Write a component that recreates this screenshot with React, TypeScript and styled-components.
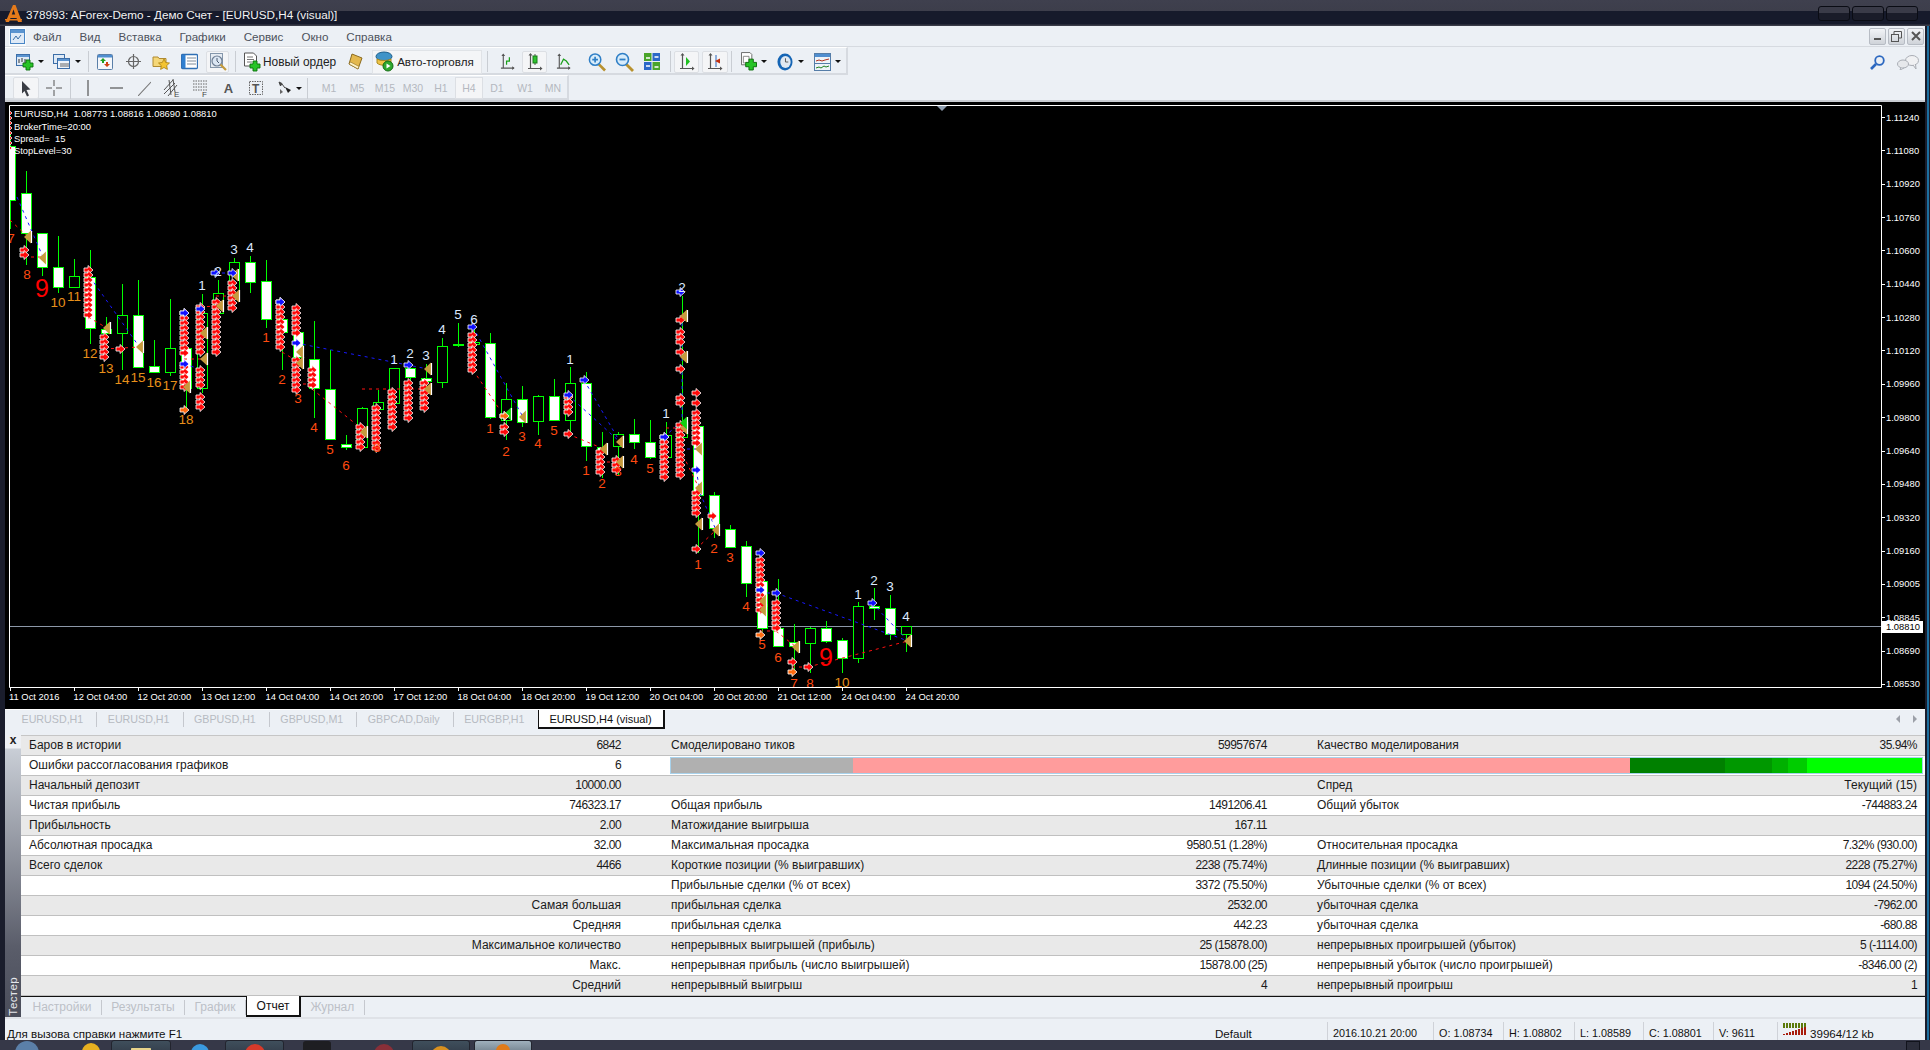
import React from 'react';
import styled, { createGlobalStyle } from 'styled-components';

const FONT = '"Liberation Sans", Arial, sans-serif';

const Global = createGlobalStyle`
  html, body { margin: 0; padding: 0; background: #1a1d2c; overflow: hidden; }
  #root { width: 1930px; height: 1050px; }
  * { box-sizing: border-box; }
`;

const App_ = styled.div`
  width: 1930px; height: 1050px; display: flex; flex-direction: column; overflow: hidden;
  font-family: ${FONT}; font-size: 12px; color: #111; background: #1a1d2c;
`;

const TitleBar = styled.div`
  height: 26px; flex: none; display: flex; align-items: center; padding: 2px 12px 0 5px;
  background: linear-gradient(#3f404e 0, #3d3e4b 11px, #161a2b 11px, #161a2b 24px, #3a3c48 25px);
  color: #f2f2f2; font-size: 11.7px;
`;
const TitleText = styled.span` margin-left: 4px; white-space: pre; `;
const GlassControls = styled.div` margin-left: auto; margin-top: -1px; display: flex; gap: 2px; `;
const GlassButton = styled.div`
  width: 32px; height: 15px; border: 1px solid #0a0c14; border-radius: 3px;
  background: linear-gradient(#3a3b48 50%, #1a1c29 50%);
`;

const Body = styled.div`
  flex: 1; min-height: 0; display: flex; flex-direction: column;
  padding: 0 2px 0 5px; background: #1a1d2c; border-right: 2px solid #1d6f9f; margin-right: 1px;
`;

const MenuBar = styled.div`
  height: 21px; flex: none; display: flex; align-items: center; background: #ecf0f5; padding-top: 1px;
  border-bottom: 1px solid #d6dae0; padding-left: 4px;
`;
const MenuIcon = styled.div` width: 17px; height: 18px; background: #f8fbfd; display: flex; align-items: center; justify-content: center; margin-right: 7px; `;
const MenuItem = styled.span` color: #4d525c; margin-right: 18px; font-size: 11.6px; `;
const WinButtons = styled.div` margin-left: auto; display: flex; gap: 2px; margin-right: 1px; margin-top: -1px; `;
const WinButton = styled.div`
  width: 17px; height: 17px; border: 1px solid #b7bcc4; border-radius: 2px; background: linear-gradient(#f2f4f7, #cfd3d9);
  display: flex; align-items: center; justify-content: center;
`;

const ToolRow = styled.div`
  height: ${p => p.$h}px; flex: none; display: flex; align-items: center; background: #ecf0f5;
  border-bottom: ${p => p.$last ? '2px solid #c9ccd2' : '0'};
`;
const ToolGroup = styled.div`
  height: 100%; display: flex; align-items: center; width: ${p => p.$w}px; padding-top: 2px;
  border-right: 2px solid #d6dae0; border-bottom: 2px solid #d6dae0; border-top: 1px solid #fff;
`;
const Slot = styled.div`
  flex: none; display: flex; align-items: center; justify-content: center;
  width: ${p => p.$w}px; margin-left: ${p => p.$ml || 0}px; height: 22px;
  ${p => p.$on ? 'background:#f4f5f7; border:1px solid #dcdfe4; border-radius:2px;' : ''}
`;
const LetterTool = styled(Slot)` color: #555; font-weight: 700; font-size: 13px; `;
const Sep = styled.div` flex: none; width: 1px; height: 21px; background: #c9cdd3; margin-left: ${p => p.$ml}px; `;
const Caret = styled.div`
  flex: none; margin-left: ${p => p.$ml}px; width: 0; height: 0;
  border-left: 3px solid transparent; border-right: 3px solid transparent; border-top: 3px solid #111;
`;
const OrderButton = styled.div` flex: none; display: flex; align-items: center; gap: 2px; margin-left: ${p => p.$ml}px; font-size: 11.9px; color: #222; white-space: pre; `;
const AutoButton = styled(OrderButton)`
  width: 110px; height: 24px; padding-left: 2px; background: #f4f5f7; border: 1px solid #e0e3e7; font-size: 11.6px;
`;
const Period = styled.div`
  flex: none; width: 28px; text-align: center; color: #b4b8bf; font-size: 10.5px; line-height: 22px; height: 22px;
  margin-left: ${p => p.$ml || 0}px;
  ${p => p.$on ? 'background:#f4f5f7; border:1px solid #dcdfe4; line-height:20px;' : ''}
`;
const RightTools = styled.div` margin-left: auto; display: flex; align-items: center; gap: 12px; padding-right: 6px; padding-top: 2px; `;

const ChartBox = styled.div` height: 608px; flex: none; background: #000; border-bottom: 1px solid #fff; `;
const ChartSvg = styled.svg` display: block; font-family: ${FONT}; `;
const AxisText = styled.text` font-size: 9.4px; fill: ${p => p.$dark ? '#000' : '#fff'}; white-space: pre; `;
const NumText = styled.text` font-size: ${p => p.$big ? 25 : 13.5}px; text-anchor: middle; dominant-baseline: central; `;

const TabBar = styled.div`
  height: 25px; flex: none; display: flex; align-items: flex-start; background: #ecf0f5; padding-left: 6px;
`;
const ChartTab = styled.div`
  height: 19px; line-height: 18px; padding: 0 13px 0 10.5px; color: #b7bbc2; font-size: 10.7px;
  white-space: pre;
  ${p => p.$active
    ? 'background:#fff;color:#111;border:1px solid #111;border-top:0;border-right:2px solid #111;border-bottom:2px solid #111;padding:0 11px;font-size:11px;margin-left:-1px;'
    : 'margin-top:2px;height:15px;line-height:15px;border-right:1px solid #c5c8ce;'}
`;
const TabArrows = styled.div` display: flex; gap: 13px; margin: 5px 8px 0 auto; `;
const TabArrow = styled.div`
  width: 0; height: 0; border-top: 4px solid transparent; border-bottom: 4px solid transparent;
  ${p => p.$left ? 'border-right: 4px solid #9ca0a8;' : 'border-left: 4px solid #9ca0a8;'}
`;

const Tester = styled.div` height: 282px; flex: none; display: flex; background: #ecf0f5; `;
const Side = styled.div`
  width: 16px; flex: none; display: flex; flex-direction: column; align-items: center; justify-content: space-between;
  background: linear-gradient(#eef0f4 0, #eef0f4 13px, #c9ced6 14px, #5a5d6a 75%, #4a4d5a 100%);
`;
const CloseX = styled.div` font-size: 12px; font-weight: 700; line-height: 12px; color: #222; margin-top: -1px; `;
const SideLabel = styled.div`
  writing-mode: vertical-rl; transform: rotate(180deg); color: #e4e6ea; font-size: 11.5px; letter-spacing: 0.4px; padding-top: 1px; line-height: 14px;
`;
const TesterMain = styled.div` flex: 1; min-width: 0; display: flex; flex-direction: column; `;
const Table = styled.div` height: 261px; flex: none; border-top: 1px solid #c6c6c6; `;
const Row = styled.div`
  height: 20px; display: flex; align-items: center; padding: 0 3px 1px 8px; gap: 50px;
  background: ${p => p.$odd ? '#e9e9e9' : '#fff'}; border-bottom: 1px solid #c0c0c0; color: #1a1a1a; font-size: 12px; white-space: pre;
`;
const Group = styled.div` display: flex; justify-content: space-between; width: ${p => p.$w}px; flex: none; `;
const Value = styled.span` margin-left: auto; letter-spacing: ${p => p.$num ? '-0.55px' : '0'}; `;
const Quality = styled.div` flex: 1; height: 17px; margin: 0 -1px -1px -1px; display: flex; border: 1px solid #a8d2ec; `;
const QualitySeg = styled.div` width: ${p => p.$w}px; flex: ${p => p.$w ? 'none' : 1}; background: ${p => p.$c}; `;
const BottomTabs = styled.div` flex: 1; display: flex; align-items: flex-start; border-top: 1px solid #111; padding-left: 2px; `;
const BottomTab = styled.div`
  height: 20px; line-height: 18px; padding: 0 9.5px; font-size: 12px; color: #bcc0c7; white-space: pre;
  ${p => p.$active
    ? 'background:#fff;color:#111;border:1px solid #111;border-top:0;border-right:2px solid #111;border-bottom:2px solid #111;margin-top:-1px;height:21px;line-height:20px;'
    : 'margin-top:3px;height:15px;line-height:14px;border-right:1px solid #c5c8ce;'}
`;

const Status = styled.div`
  height: 23px; flex: none; display: flex; align-items: flex-end; background: #ecf0f5; box-shadow: inset 0 2px 0 #dfe2e7; overflow: hidden;
  font-size: 11.6px; color: #111; white-space: pre; padding-left: 2px;
`;
const StatusCell = styled.div`
  width: ${p => p.$w}px; flex: none; height: 18px; line-height: 23px; padding-left: ${p => p.$pad ?? 5}px;
  border-left: ${p => p.$sep ? '1px solid #cfd2d8' : '0'}; display: flex; align-items: flex-start;
  font-size: ${p => p.$num ? 10.8 : 11.6}px; gap: ${p => p.$gap || 0}px;
`;
const StatusSpring = styled.div` flex: 1; `;

const Taskbar = styled.div` height: 10px; flex: none; display: flex; background: #363848; overflow: hidden; align-items: flex-start; `;
const TaskItem = styled.div`
  flex: none; width: ${p => p.$w}px; margin-left: ${p => p.$ml}px; height: 24px; display: flex; justify-content: center; padding-top: 1px; border-radius: 3px;
  ${p => p.$btn === 1 ? 'background:linear-gradient(#3f4f5c,#2a2f3c);border:1px solid #22242e;' : ''}
  ${p => p.$btn === 2 ? 'background:linear-gradient(#9fb0bc,#4c5a66);border:1px solid #22242e;' : ''}
`;
const TaskGlyph = styled.div`
  width: ${p => p.$s}px; height: ${p => p.$s}px; border-radius: ${p => p.$r ?? 50}%; background: ${p => p.$c}; margin-top: ${p => p.$t || 0}px;
`;
const ShowDesktop = styled.div` margin-left: auto; margin-right: 10px; margin-top: 1px; width: 14px; height: 12px; border: 1px solid #11131c; background: #2b2d3a; `;

/* ---------- toolbar icons ---------- */
const Plus = ({ x = 0, y = 0, s = 1 }: any) => (
  <path transform={`translate(${x} ${y}) scale(${s})`} d="M3 0h4v3h3v4H7v3H3V7H0V3h3z" fill="#27c427" stroke="#0c6f0c" strokeWidth="0.9" />
);
const Ico = ({ w = 18, h = 18, children }: any) => <svg width={w} height={h} viewBox={`0 0 ${w} ${h}`}>{children}</svg>;
const NewChart = () => <Ico><rect x=".5" y="1.5" width="13" height="11" fill="#dfeaf6" stroke="#3c6ea8" /><rect x="1" y="2" width="12" height="2" fill="#5b94d0" /><path d="M3 10V6M6 9V5M9 10V6" stroke="#333" /><Plus x={7} y={7} /></Ico>;
const Profiles = () => <Ico><rect x=".5" y="1.5" width="11" height="9" fill="#dfeaf6" stroke="#3c6ea8" /><rect x="4.5" y="5.5" width="12" height="10" fill="#eef4fb" stroke="#3c6ea8" /><rect x="5" y="6" width="11" height="2" fill="#5b94d0" /><path d="M7 13h9M7 11h9" stroke="#666" /></Ico>;
const Market = () => <Ico w={16} h={16}><rect x=".5" y=".5" width="15" height="15" rx="1" fill="#f4f7fb" stroke="#5a7fa8" /><rect x="1" y="1" width="14" height="2.5" fill="#4f8ed0" /><path d="M6 4l3 3H7v2H5V7H3z" fill="#20a020" /><path d="M10 13l-3-3h2V8h2v2h2z" fill="#d04010" /></Ico>;
const Cross = () => <Ico w={17} h={17}><circle cx="8.5" cy="8.5" r="5" fill="none" stroke="#666" strokeWidth="1.2" /><path d="M8.5 1v15M1 8.5h15" stroke="#666" strokeWidth="1.2" /></Ico>;
const FolderStar = () => <Ico><path d="M1 4h5l1 1.500h7v8H1z" fill="#f5d778" stroke="#b08a30" /><path d="M12 6l1.700 3.500 3.800.5-2.800 2.600.7 3.800-3.400-1.900-3.400 1.900.7-3.800L6.500 10l3.800-.5z" fill="#f4c430" stroke="#a87f10" strokeWidth=".8" /></Ico>;
const Terminal = () => <Ico w={17} h={17}><rect x=".5" y="1.500" width="16" height="14" rx="1" fill="#fff" stroke="#2f6fb5" strokeWidth="1.300" /><rect x="1" y="2" width="3.500" height="13" fill="#2f7fd0" /><path d="M6 5h9M6 8h9M6 11h9" stroke="#7f8b99" /></Ico>;
const TesterIcon = () => <Ico w={18} h={20}><rect x="1.500" y="1.500" width="12" height="14" fill="#e5ebf2" stroke="#8496ab" /><circle cx="8" cy="9" r="5" fill="#dbe6f3" stroke="#6f7f95" strokeWidth="1.200" /><path d="M8 6v3l2 2" stroke="#4a5a70" fill="none" /><path d="M11.500 12.500L17 18" stroke="#c49a3c" strokeWidth="2.200" /></Ico>;
const OrderIcon = () => <Ico w={17} h={20}><path d="M.5 1h9l3 3v10H.5z" fill="#fff" stroke="#555" /><path d="M3 5h6M3 7.500h7M3 10h5" stroke="#777" /><Plus x={6} y={9} /></Ico>;
const Editor = () => <Ico w={15} h={17}><path d="M4 1l10 4-4 11L1 11z" fill="#e3b84e" stroke="#8a6a1e" /><path d="M1 11l9 5 1-2.500L2.500 9z" fill="#fff3c8" stroke="#8a6a1e" strokeWidth=".6" /></Ico>;
const Auto = () => <Ico w={20} h={21}><ellipse cx="9" cy="5.500" rx="8" ry="4.500" fill="#3f93c8" stroke="#1e5f8c" /><path d="M2 8c3 2 11 2 14 0v4c-3 3-11 3-14 0z" fill="#f0c448" stroke="#a98a20" /><circle cx="13" cy="15" r="5" fill="#2ea82e" stroke="#136c13" /><path d="M11.500 12.500v5l4-2.500z" fill="#fff" /></Ico>;
const Axes = ({ children }: any) => <Ico w={16} h={19}><path d="M3.500 2v15M1 16.500h14" stroke="#555" strokeWidth="1.200" /><path d="M3.500 1l-2 2.500h4zM15.500 16.500l-2.500-2v4z" fill="#555" />{children}</Ico>;
const Zoom = ({ plus }: any) => <Ico w={19} h={20}><path d="M11 12l7 7" stroke="#b8912e" strokeWidth="2.800" /><circle cx="7.500" cy="7.500" r="6" fill="#d8ecfa" stroke="#2f7fc6" strokeWidth="1.600" /><path d={plus ? 'M4.500 7.500h6M7.500 4.500v6' : 'M4.500 7.500h6'} stroke="#2f7fc6" strokeWidth="1.800" /></Ico>;
const Tile = () => <Ico w={16} h={19}><rect x="0" y="1" width="7.500" height="8" fill="#4aa52a" /><rect x="8.500" y="1" width="7.500" height="8" fill="#2b68c8" /><rect x="0" y="10" width="7.500" height="8" fill="#2b68c8" /><rect x="8.500" y="10" width="7.500" height="8" fill="#4aa52a" /><path d="M2 6h4M10.500 5h4M2 14h4M10.500 15h4" stroke="#fff" strokeWidth="1.500" /></Ico>;
const Doc2 = () => <Ico w={17} h={21}><path d="M.5 1h9l2 2v11H.5z" fill="#fff" stroke="#666" /><path d="M2.500 5h6v7h-6z" fill="#fff" stroke="#888" /><Plus x={5} y={8} s={1.150} /></Ico>;
const Clock = () => <Ico w={17} h={20}><ellipse cx="8.500" cy="10" rx="8" ry="9" fill="#1565b5" /><ellipse cx="9" cy="10" rx="5.500" ry="6.500" fill="#dfe8f2" /><path d="M9 6v4h3" stroke="#555" fill="none" /></Ico>;
const Indic = () => <Ico w={17} h={18}><rect x=".5" y=".5" width="16" height="17" fill="#eef3f8" stroke="#557da8" /><rect x="1" y="1" width="15" height="3" fill="#4f8ed0" /><path d="M2 8l3-1 3 1 3-1 4-1" stroke="#b03020" fill="none" /><path d="M1 10.500h15" stroke="#557da8" /><path d="M2 15l3-1 2 1 3-2 2 1 3-1" stroke="#208020" fill="none" /></Ico>;
const Cursor = () => <Ico w={12} h={17}><path d="M2 1l8.500 8.500-4 .5 2.500 5.500-2 1-2.500-5.500L2 13.500z" fill="#3a3d44" /></Ico>;
const CrossHair = () => <Ico w={16} h={16}><path d="M8 0v6M8 10v6M0 8h6M10 8h6" stroke="#555" /></Ico>;
const VLine = () => <Ico w={4} h={16}><path d="M2 0v16" stroke="#555" strokeWidth="1.200" /></Ico>;
const HLine = () => <Ico w={13} h={4}><path d="M0 2h13" stroke="#555" strokeWidth="1.200" /></Ico>;
const Trend = () => <Ico w={13} h={15}><path d="M0 15L13 1" stroke="#777" strokeWidth="1.100" /></Ico>;
const Chan = () => <Ico w={18} h={20}><path d="M1 12L10 2M1 16L12 5M5 18L14 7M6 2l2 15M10 1l2 13" stroke="#555" fill="none" /><text x="11" y="19" fontSize="8" fill="#444" fontFamily={FONT}>E</text></Ico>;
const Fibo = () => <Ico w={15} h={20}><path d="M0 3h14M0 6h14M0 9h14M0 12h14" stroke="#666" strokeDasharray="1.500 1" /><text x="9" y="19" fontSize="8" fill="#444" fontFamily={FONT}>F</text></Ico>;
const TextBox = () => <Ico w={14} h={16}><rect x=".5" y="1.500" width="13" height="13" fill="none" stroke="#666" strokeDasharray="1.500 1" /><text x="3" y="12.500" fontSize="12" fontWeight="700" fill="#555" fontFamily={FONT}>T</text></Ico>;
const Arrows = () => <Ico w={14} h={14}><path d="M1 1l3 1.500L2.500 5zM4 3l3 4" stroke="#444" fill="#444" /><path d="M7 6l6 3-3 3z" fill="#222" /><path d="M2 8l3 3-3 2z" fill="#666" /></Ico>;
const Search = () => <Ico w={15} h={15}><circle cx="9.500" cy="5.500" r="4.300" fill="none" stroke="#2c68c0" strokeWidth="1.800" /><path d="M6 9l-5 5" stroke="#2c68c0" strokeWidth="2.600" /></Ico>;
const Chat = () => <Ico w={22} h={15}><ellipse cx="15" cy="5.500" rx="6.500" ry="5" fill="#f0f1f3" stroke="#a9adb4" /><path d="M16 10l3 4-.5-5" fill="#f0f1f3" stroke="#a9adb4" /><ellipse cx="6" cy="9" rx="5.500" ry="4" fill="#e6e8eb" stroke="#a9adb4" /><path d="M4 12.500l-1 2.500 4-2" fill="#e6e8eb" stroke="#a9adb4" /></Ico>;
const Logo = () => <Ico w={17} h={19}><path d="M8 0h2.500L17 17h-4l-1.500-4H5.500L4 17H.5z" fill="#e57a1a" /><path d="M6.800 9.500h3.400L8.500 4.500z" fill="#161a2b" /><path d="M0 14h17v1.500H0z" fill="#e57a1a" /></Ico>;
const MenuDoc = () => <Ico w={15} h={15}><rect x=".5" y=".5" width="14" height="14" fill="#dfeaf7" stroke="#4a86c5" /><rect x="1" y="1" width="13" height="3" fill="#5b94d0" /><path d="M3 11l3-4 2 3 3-4" stroke="#3a6fa8" fill="none" /></Ico>;
const Bars = () => <Ico w={24} h={13}>{[0, 3, 6, 9, 12, 15, 18, 21].map((x, i) => (
  <g key={x}><rect x={x} y={1} width="2" height="5" fill="#5c7a0a" /><rect x={x} y={12 - i} width="2" height={i + 1} fill="#a81c0c" /></g>
))}</Ico>;

/* ---------- chart data: page coordinates ---------- */
type C = [number, number, number, number, number, number];
const candles: C[] = [
  [10, 134, 146, 200, 229, 1],
  [26, 171, 193, 233, 265, 1], [42, 233, 233, 267, 276, 1], [58, 236, 267, 287, 293, 1], [74, 259, 276, 287, 287, 0],
  [90, 250, 277, 328, 344, 1], [106, 317, 329, 333, 359, 1], [122, 284, 315, 333, 370, 0], [138, 280, 315, 367, 367, 1],
  [154, 340, 366, 372, 373, 1], [170, 299, 348, 372, 376, 0], [186, 348, 348, 388, 410, 1], [202, 294, 313, 388, 393, 0],
  [218, 280, 293, 313, 313, 0], [234, 258, 262, 293, 293, 0], [250, 256, 262, 282, 293, 1], [266, 260, 281, 319, 328, 1],
  [282, 319, 319, 332, 370, 1], [298, 332, 332, 357, 390, 1], [314, 321, 359, 388, 418, 1], [330, 350, 389, 439, 439, 1],
  [346, 435, 444, 447, 450, 1], [362, 407, 408, 447, 447, 0], [378, 390, 402, 409, 420, 0], [394, 368, 368, 403, 430, 0],
  [410, 368, 368, 377, 420, 1], [426, 364, 378, 381, 407, 1], [442, 338, 346, 382, 388, 0], [458, 323, 344, 345, 347, 1],
  [474, 327, 342, 344, 373, 0], [490, 333, 343, 417, 419, 1], [506, 383, 399, 420, 440, 0], [522, 386, 399, 422, 427, 1],
  [538, 395, 396, 421, 435, 0], [554, 379, 396, 420, 420, 1], [570, 367, 383, 420, 437, 0], [586, 372, 383, 446, 461, 1],
  [602, 432, 447, 450, 478, 1], [618, 432, 434, 446, 475, 0], [634, 419, 434, 442, 449, 1], [650, 420, 442, 457, 459, 1],
  [666, 422, 435, 457, 457, 0], [682, 296, 423, 437, 437, 0], [698, 415, 426, 495, 553, 1], [714, 492, 495, 528, 538, 1],
  [730, 525, 529, 547, 548, 1], [746, 541, 546, 583, 597, 1], [762, 580, 581, 628, 632, 1], [778, 579, 628, 646, 647, 1],
  [794, 624, 642, 646, 673, 1], [810, 627, 628, 643, 673, 0], [826, 621, 628, 641, 643, 1], [842, 638, 640, 658, 673, 1],
  [858, 602, 606, 658, 663, 0], [874, 588, 606, 608, 620, 1], [890, 595, 608, 634, 640, 1], [906, 626, 626, 634, 652, 0],
];
const stacks: [number, number, number][] = [
  [7, 113, 150], [24, 250, 257], [88, 270, 317], [104, 337, 357], [120, 349, 349], [184, 313, 353], [184, 367, 387],
  [200, 307, 352], [200, 370, 388], [200, 397, 408], [216, 302, 352], [232, 283, 310], [280, 302, 350], [296, 308, 333],
  [296, 360, 390], [312, 370, 387], [360, 427, 450], [376, 408, 450], [392, 392, 430], [408, 383, 420], [424, 383, 408],
  [472, 335, 373], [504, 416, 416], [504, 427, 434], [568, 397, 412], [568, 434, 434], [600, 452, 473], [616, 460, 472],
  [664, 437, 480], [680, 320, 320], [680, 332, 342], [680, 352, 352], [680, 369, 369], [680, 398, 407], [680, 425, 478],
  [696, 393, 393], [696, 403, 403], [696, 413, 443], [696, 493, 513], [696, 549, 549], [712, 516, 516], [760, 560, 610],
  [776, 603, 632], [792, 662, 662], [808, 667, 667],
];
const blues: [number, number][] = [
  [184, 313], [184, 364], [200, 309], [215, 273], [232, 273], [280, 302], [296, 343], [408, 365], [472, 327],
  [568, 395], [584, 380], [664, 437], [680, 292], [696, 470], [760, 553], [760, 590], [776, 593], [872, 603],
];
const oranges: [number, number][] = [[184, 410], [760, 635], [792, 672], [504, 416]];
const tans: [number, number][] = [
  [28, 237], [43, 258], [107, 328], [140, 347], [187, 387], [204, 333], [204, 359], [220, 306], [235, 275], [236, 296],
  [300, 352], [300, 363], [364, 432], [428, 369], [428, 389], [523, 417], [604, 449], [620, 442], [620, 462], [684, 316],
  [684, 357], [684, 428], [699, 449], [699, 488], [699, 524], [716, 530], [763, 601], [763, 610], [796, 647], [908, 641],
];
const greens: [number, number][] = [[508, 414], [684, 423]];
const blueLines = [
  [17, 197, 43, 257], [90, 277, 138, 345], [296, 343, 428, 369], [473, 327, 523, 417], [568, 395, 620, 442], [584, 380, 620, 442],
  [184, 364, 200, 369], [215, 273, 232, 273], [682, 316, 682, 423], [664, 437, 680, 423], [680, 449, 699, 449], [696, 470, 700, 490],
  [700, 493, 716, 530], [760, 593, 776, 593], [776, 593, 908, 641], [872, 603, 908, 641],
];
const redLines = [
  [10, 220, 28, 237], [24, 257, 43, 257], [88, 317, 107, 328], [104, 349, 140, 347], [184, 359, 204, 359], [200, 307, 216, 306],
  [216, 296, 236, 296], [282, 352, 300, 363], [296, 384, 312, 384], [312, 389, 362, 429], [362, 389, 428, 389], [473, 370, 500, 410],
  [568, 434, 604, 449], [600, 462, 616, 462], [666, 428, 680, 428], [680, 449, 699, 488], [696, 549, 716, 530], [760, 631, 776, 631],
  [776, 631, 796, 647], [792, 667, 808, 667], [808, 667, 908, 641],
];
const RED = '#ff4a10', AMB = '#e8901a', WHT = '#dce9ff';
const nums: [string, number, number, string, boolean?][] = [
  ['7', 11, 238, RED], ['8', 27, 274, RED], ['9', 42, 288, '#ff0000', true], ['10', 58, 302, AMB], ['11', 74, 296, AMB],
  ['12', 90, 353, AMB], ['13', 106, 368, AMB], ['14', 122, 379, AMB], ['15', 138, 377, AMB], ['16', 154, 382, AMB],
  ['17', 170, 385, AMB], ['18', 186, 419, AMB], ['1', 202, 285, WHT], ['2', 218, 271, WHT], ['3', 234, 249, WHT],
  ['4', 250, 247, WHT], ['1', 266, 337, RED], ['2', 282, 379, RED], ['3', 298, 398, RED], ['4', 314, 427, RED],
  ['5', 330, 449, RED], ['6', 346, 465, RED], ['8', 377, 447, RED], ['1', 394, 359, WHT], ['2', 410, 353, WHT], ['3', 426, 355, WHT],
  ['4', 442, 329, WHT], ['5', 458, 314, WHT], ['6', 474, 319, WHT], ['1', 490, 428, RED], ['2', 506, 451, RED],
  ['3', 522, 436, RED], ['4', 538, 443, RED], ['5', 554, 430, RED], ['1', 570, 359, WHT], ['1', 586, 470, RED],
  ['2', 602, 483, RED], ['3', 618, 471, RED], ['4', 634, 459, RED], ['5', 650, 468, RED], ['1', 666, 413, WHT],
  ['2', 682, 287, WHT], ['1', 698, 564, RED], ['2', 714, 548, RED], ['3', 730, 557, RED], ['4', 746, 606, RED],
  ['5', 762, 644, RED], ['6', 778, 657, RED], ['7', 794, 683, RED], ['8', 810, 683, RED], ['9', 826, 657, '#ff0000', true],
  ['10', 842, 682, AMB], ['1', 858, 594, WHT], ['2', 874, 580, WHT], ['3', 890, 586, WHT], ['4', 906, 616, WHT],
];
const prices = ['1.11240', '1.11080', '1.10920', '1.10760', '1.10600', '1.10440', '1.10280', '1.10120', '1.09960', '1.09800', '1.09640', '1.09480', '1.09320', '1.09160', '1.09005', '1.08845', '1.08690', '1.08530'];
const dates = ['11 Oct 2016', '12 Oct 04:00', '12 Oct 20:00', '13 Oct 12:00', '14 Oct 04:00', '14 Oct 20:00', '17 Oct 12:00', '18 Oct 04:00', '18 Oct 20:00', '19 Oct 12:00', '20 Oct 04:00', '20 Oct 20:00', '21 Oct 12:00', '24 Oct 04:00', '24 Oct 20:00'];

const ArrowMark = ({ x, y, c }: any) => (
  <path transform={`translate(${x} ${y})`} d="M-4-2H0V-4.500L5 0 0 4.500V2H-4z" fill={c} stroke="#fff" strokeWidth=".8" />
);
const Tan = ({ x, y, c = '#c69a3e' }: any) => (
  <g transform={`translate(${x} ${y})`}>
    <path d="M3-6.500V6.500L-4 0z" fill={c} /><path d="M3.500-6V6" stroke="#fff" strokeWidth="1.200" />
  </g>
);

const Chart = () => {
  const marks: JSX.Element[] = [];
  stacks.forEach(([x, a, b], i) => {
    for (let y = a, k = 0; y <= b; y += 5, k++) marks.push(<ArrowMark key={`s${i}-${k}`} x={x} y={y} c="#ff0808" />);
  });
  return (
    <ChartSvg width="1918" height="607" viewBox="5 102 1918 607">
      <defs><clipPath id="plot"><rect x="10" y="106" width="1871" height="581" /></clipPath></defs>
      <rect x="5" y="102" width="1918" height="607" fill="#000" />
      <path d="M9.500 105.500H1881.500V687.500H9.500z" fill="none" stroke="#fff" />
      <path d="M937 106h10l-5 5z" fill="#8f9eb0" />
      <g shapeRendering="crispEdges">
        {prices.map((_, i) => <path key={i} d={`M1881 ${117 + Math.round(i * 33.35)}h4`} stroke="#fff" />)}
        {dates.map((_, i) => <path key={i} d={`M${10 + i * 64}.5 687v4`} stroke="#fff" />)}
        <path d="M10 626.500H1881" stroke="#8c98a8" />
      </g>
      <g clipPath="url(#plot)">
        <g shapeRendering="crispEdges">
          {candles.map(([x, hi, t, b, lo, w], i) => (
            <g key={i}>
              <path d={`M${x}.5 ${hi}V${t}M${x}.5 ${b}V${lo}`} stroke="#00ff00" />
              <rect x={x - 5 + 0.5} y={t + 0.5} width={10} height={Math.max(b - t, 1)} fill={w ? '#fff' : '#000'} stroke="#00ff00" />
            </g>
          ))}
        </g>
        <g strokeDasharray="3 4" fill="none" strokeWidth="1">
          {blueLines.map((l, i) => <line key={i} x1={l[0]} y1={l[1]} x2={l[2]} y2={l[3]} stroke="#1818ff" />)}
          {redLines.map((l, i) => <line key={i} x1={l[0]} y1={l[1]} x2={l[2]} y2={l[3]} stroke="#ff1010" />)}
        </g>
        {marks}
        {tans.map(([x, y], i) => <Tan key={i} x={x} y={y} />)}
        {greens.map(([x, y], i) => <Tan key={i} x={x} y={y} c="#10d010" />)}
        {oranges.map(([x, y], i) => <ArrowMark key={i} x={x} y={y} c="#ff6a10" />)}
        {blues.map(([x, y], i) => <ArrowMark key={i} x={x} y={y} c="#1010ff" />)}
        {nums.map(([t, x, y, c, big], i) => <NumText key={i} x={x} y={y} fill={c} $big={big}>{t}</NumText>)}
      </g>
      {prices.map((p, i) => <AxisText key={p} x="1886" y={120.500 + i * 33.35}>{p}</AxisText>)}
      <rect x="1882" y="621" width="41" height="12" fill="#fff" />
      <AxisText x="1886" y="630" $dark>1.08810</AxisText>
      {dates.map((d, i) => <AxisText key={d} x={(i === 0 ? 9 : 9.5 + i * 64)} y="700">{d}</AxisText>)}
      <AxisText x="14" y="116.500">{'EURUSD,H4  1.08773 1.08816 1.08690 1.08810'}</AxisText>
      <AxisText x="14" y="129.500">BrokerTime=20:00</AxisText>
      <AxisText x="14" y="142">{'Spread=  15'}</AxisText>
      <AxisText x="14" y="154">StopLevel=30</AxisText>
    </ChartSvg>
  );
};

type R = { a: [string, string?]; b?: [string, string?]; c?: [string, string?]; bar?: boolean };
const rows: R[] = [
  { a: ['Баров в истории', '6842'], b: ['Смоделировано тиков', '59957674'], c: ['Качество моделирования', '35.94%'] },
  { a: ['Ошибки рассогласования графиков', '6'], bar: true },
  { a: ['Начальный депозит', '10000.00'], c: ['Спред', 'Текущий (15)'] },
  { a: ['Чистая прибыль', '746323.17'], b: ['Общая прибыль', '1491206.41'], c: ['Общий убыток', '-744883.24'] },
  { a: ['Прибыльность', '2.00'], b: ['Матожидание выигрыша', '167.11'] },
  { a: ['Абсолютная просадка', '32.00'], b: ['Максимальная просадка', '9580.51 (1.28%)'], c: ['Относительная просадка', '7.32% (930.00)'] },
  { a: ['Всего сделок', '4466'], b: ['Короткие позиции (% выигравших)', '2238 (75.74%)'], c: ['Длинные позиции (% выигравших)', '2228 (75.27%)'] },
  { a: ['', ''], b: ['Прибыльные сделки (% от всех)', '3372 (75.50%)'], c: ['Убыточные сделки (% от всех)', '1094 (24.50%)'] },
  { a: ['', 'Самая большая'], b: ['прибыльная сделка', '2532.00'], c: ['убыточная сделка', '-7962.00'] },
  { a: ['', 'Средняя'], b: ['прибыльная сделка', '442.23'], c: ['убыточная сделка', '-680.88'] },
  { a: ['', 'Максимальное количество'], b: ['непрерывных выигрышей (прибыль)', '25 (15878.00)'], c: ['непрерывных проигрышей (убыток)', '5 (-1114.00)'] },
  { a: ['', 'Макс.'], b: ['непрерывная прибыль (число выигрышей)', '15878.00 (25)'], c: ['непрерывный убыток (число проигрышей)', '-8346.00 (2)'] },
  { a: ['', 'Средний'], b: ['непрерывный выигрыш', '4'], c: ['непрерывный проигрыш', '1'] },
];
const Pair = ({ w, d }: { w: number; d?: [string, string?] }) => (
  <Group $w={w}>
    <span>{d ? d[0] : ''}</span>
    <Value $num={!!d && /^[-\d]/.test(d[1] || '')}>{d ? d[1] : ''}</Value>
  </Group>
);

export default function App() {
  return (
    <App_>
      <Global />
      <TitleBar>
        <Logo />
        <TitleText>378993: AForex-Demo - Демо Счет - [EURUSD,H4 (visual)]</TitleText>
        <GlassControls><GlassButton /><GlassButton /><GlassButton /></GlassControls>
      </TitleBar>
      <Body>
        <MenuBar>
          <MenuIcon><MenuDoc /></MenuIcon>
          <MenuItem>Файл</MenuItem>
          <MenuItem>Вид</MenuItem>
          <MenuItem>Вставка</MenuItem>
          <MenuItem>Графики</MenuItem>
          <MenuItem>Сервис</MenuItem>
          <MenuItem>Окно</MenuItem>
          <MenuItem>Справка</MenuItem>
          <WinButtons>
            <WinButton><svg width="9" height="9"><rect x="1" y="6" width="7" height="2" fill="#555" /></svg></WinButton>
            <WinButton><svg width="11" height="11"><rect x=".5" y="3.500" width="7" height="7" fill="none" stroke="#555" /><path d="M3 3V.5h7.500V7H8" fill="none" stroke="#555" /></svg></WinButton>
            <WinButton><svg width="10" height="10"><path d="M1 1l8 8M9 1l-8 8" stroke="#555" strokeWidth="2" /></svg></WinButton>
          </WinButtons>
        </MenuBar>
        <ToolRow $h={28}>
          <ToolGroup $w={843}>
            <Slot $w={18} $ml={11}><NewChart /></Slot><Caret $ml={4} />
            <Slot $w={18} $ml={9}><Profiles /></Slot><Caret $ml={4} />
            <Sep $ml={7} />
            <Slot $w={16} $ml={8}><Market /></Slot>
            <Slot $w={17} $ml={12}><Cross /></Slot>
            <Slot $w={18} $ml={10}><FolderStar /></Slot>
            <Slot $w={17} $ml={11}><Terminal /></Slot>
            <Slot $w={23} $ml={8} $on><TesterIcon /></Slot>
            <Sep $ml={6} />
            <OrderButton $ml={8}><OrderIcon />Новый ордер</OrderButton>
            <Slot $w={15} $ml={12}><Editor /></Slot>
            <AutoButton $ml={9}><Auto />Авто-торговля</AutoButton>
            <Sep $ml={5} />
            <Slot $w={15} $ml={12}><Axes><path d="M7 13V9h3V5" stroke="#1aa01a" fill="none" strokeWidth="1.300" /></Axes></Slot>
            <Slot $w={25} $ml={7} $on><Axes><path d="M8 2v11" stroke="#555" /><rect x="6" y="4" width="4" height="7" fill="#2fc42f" stroke="#1a7a1a" /></Axes></Slot>
            <Slot $w={15} $ml={9}><Axes><path d="M5 13l3-6 3 2 3 4" stroke="#1aa01a" fill="none" strokeWidth="1.300" /></Axes></Slot>
            <Slot $w={18} $ml={17}><Zoom plus /></Slot>
            <Slot $w={19} $ml={9}><Zoom /></Slot>
            <Slot $w={16} $ml={10}><Tile /></Slot>
            <Sep $ml={10} />
            <Slot $w={25} $ml={3} $on><Axes><path d="M7 5v9l4-4.500z" fill="#20c020" /></Axes></Slot>
            <Slot $w={26} $ml={3} $on><Axes><path d="M9 3v12" stroke="#2c68c0" /><path d="M13 6.500v5L8 9z" fill="#c03010" /></Axes></Slot>
            <Sep $ml={3} />
            <Slot $w={16} $ml={9}><Doc2 /></Slot><Caret $ml={4} />
            <Slot $w={16} $ml={10}><Clock /></Slot><Caret $ml={5} />
            <Slot $w={17} $ml={10}><Indic /></Slot><Caret $ml={4} />
          </ToolGroup>
          <RightTools><Search /><Chat /></RightTools>
        </ToolRow>
        <ToolRow $h={27} $last>
          <ToolGroup $w={564}>
            <Slot $w={26} $ml={8} $on><Cursor /></Slot>
            <Slot $w={16} $ml={7}><CrossHair /></Slot>
            <Sep $ml={8} />
            <Slot $w={4} $ml={15}><VLine /></Slot>
            <Slot $w={13} $ml={20}><HLine /></Slot>
            <Slot $w={13} $ml={15}><Trend /></Slot>
            <Slot $w={18} $ml={12}><Chan /></Slot>
            <Slot $w={15} $ml={12}><Fibo /></Slot>
            <LetterTool $w={11} $ml={15}>A</LetterTool>
            <Slot $w={14} $ml={15}><TextBox /></Slot>
            <Slot $w={14} $ml={15}><Arrows /></Slot>
            <Caret $ml={4} />
            <Sep $ml={5} />
            <Period $ml={7}>M1</Period>
            <Period>M5</Period>
            <Period>M15</Period>
            <Period>M30</Period>
            <Period>H1</Period>
            <Period $on>H4</Period>
            <Period>D1</Period>
            <Period>W1</Period>
            <Period>MN</Period>
          </ToolGroup>
        </ToolRow>
        <ChartBox><Chart /></ChartBox>
        <TabBar>
          {['EURUSD,H1', 'EURUSD,H1', 'GBPUSD,H1', 'GBPUSD,M1', 'GBPCAD,Daily', 'EURGBP,H1'].map((t, i) => <ChartTab key={i}>{t}</ChartTab>)}
          <ChartTab $active>EURUSD,H4 (visual)</ChartTab>
          <TabArrows><TabArrow $left /><TabArrow /></TabArrows>
        </TabBar>
        <Tester>
          <Side>
            <CloseX>x</CloseX>
            <SideLabel>Тестер</SideLabel>
          </Side>
          <TesterMain>
            <Table>
              {rows.map((r, i) => (
                <Row key={i} $odd={i % 2 === 0}>
                  <Pair w={592} d={r.a} />
                  {r.bar ? (
                    <Quality>
                      <QualitySeg $w={182} $c="#b0b0b0" />
                      <QualitySeg $w={777} $c="#ff9c9c" />
                      <QualitySeg $w={95} $c="#008000" />
                      <QualitySeg $w={47} $c="#009800" />
                      <QualitySeg $w={16} $c="#00b000" />
                      <QualitySeg $w={19} $c="#00cc00" />
                      <QualitySeg $c="#00ff00" />
                    </Quality>
                  ) : (
                    <>
                      <Pair w={596} d={r.b} />
                      <Pair w={600} d={r.c} />
                    </>
                  )}
                </Row>
              ))}
            </Table>
            <BottomTabs>
              <BottomTab>Настройки</BottomTab>
              <BottomTab>Результаты</BottomTab>
              <BottomTab>График</BottomTab>
              <BottomTab $active>Отчет</BottomTab>
              <BottomTab>Журнал</BottomTab>
            </BottomTabs>
          </TesterMain>
        </Tester>
        <Status>
          <StatusCell $w={400} $pad={0}>Для вызова справки нажмите F1</StatusCell>
          <StatusSpring />
          <StatusCell $w={112} $pad={0}>Default</StatusCell>
          <StatusCell $w={106} $sep $num>2016.10.21 20:00</StatusCell>
          <StatusCell $w={70} $sep $num>O: 1.08734</StatusCell>
          <StatusCell $w={71} $sep $num>H: 1.08802</StatusCell>
          <StatusCell $w={69} $sep $num>L: 1.08589</StatusCell>
          <StatusCell $w={70} $sep $num>C: 1.08801</StatusCell>
          <StatusCell $w={64} $sep $num>V: 9611</StatusCell>
          <StatusCell $w={148} $sep $gap={3}><Bars />39964/12 kb</StatusCell>
        </Status>
      </Body>
      <Taskbar>
        <TaskItem $w={24} $ml={15}><TaskGlyph $s={24} $c="#5b7fa8" /></TaskItem>
        <TaskItem $w={22} $ml={41}><TaskGlyph $s={18} $c="#e8b020" $t={2} /></TaskItem>
        <TaskItem $w={60} $ml={9} $btn={1}><TaskGlyph $s={20} $r={2} $c="#e8d48a" $t={6} /></TaskItem>
        <TaskItem $w={20} $ml={19}><TaskGlyph $s={18} $c="#3a9ae0" $t={3} /></TaskItem>
        <TaskItem $w={59} $ml={15} $btn={1}><TaskGlyph $s={20} $c="#d83a2a" $t={2} /></TaskItem>
        <TaskItem $w={32} $ml={17}><TaskGlyph $s={28} $r={10} $c="#1e1e22" /></TaskItem>
        <TaskItem $w={22} $ml={40}><TaskGlyph $s={20} $c="#8a2f38" $t={3} /></TaskItem>
        <TaskItem $w={58} $ml={17} $btn={1}><TaskGlyph $s={20} $c="#d9901e" $t={4} /></TaskItem>
        <TaskItem $w={58} $ml={4} $btn={2}><TaskGlyph $s={14} $c="#e07a18" $t={2} /></TaskItem>
        <ShowDesktop />
      </Taskbar>
    </App_>
  );
}
